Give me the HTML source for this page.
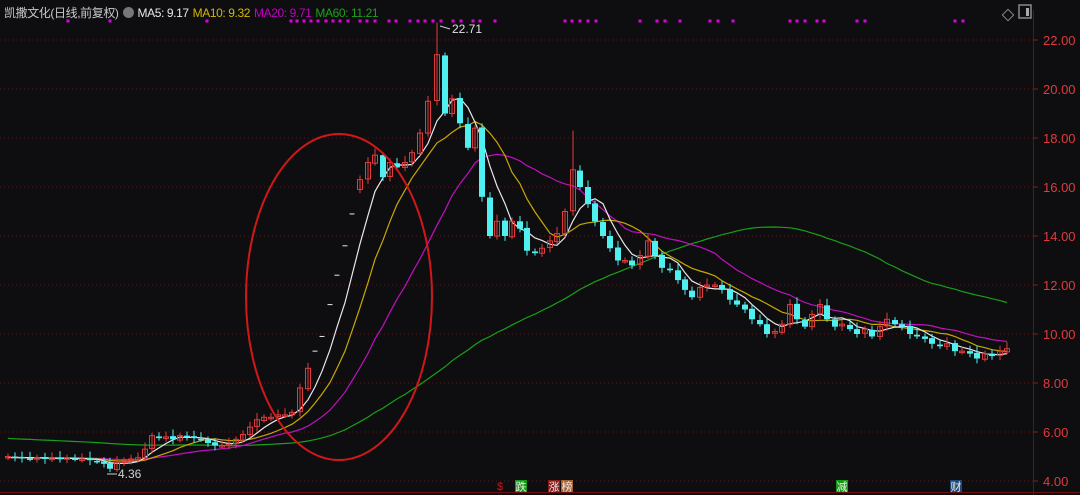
<!DOCTYPE html><html><head><meta charset="utf-8"><style>
body{margin:0;background:#0e0e11;width:1080px;height:495px;overflow:hidden;font-family:"Liberation Sans","Noto Sans CJK SC",sans-serif}
#hd{position:absolute;left:4px;top:4px;font-size:12px;color:#d0d0d0;white-space:nowrap;letter-spacing:-0.4px}
#hd span{margin-right:4px}
</style></head><body>
<svg id="s" width="1080" height="495" style="position:absolute;left:0;top:0"></svg>
<div id="hd"><span style="color:#c8c8c8">凯撒文化(日线,前复权)</span><span style="display:inline-block;width:11px;height:11px;border-radius:50%;background:#777;vertical-align:-1px;margin-right:4px"></span><span style="color:#e8e8e8">MA5: 9.17</span><span style="color:#d4b800">MA10: 9.32</span><span style="color:#c000c0">MA20: 9.71</span><span style="color:#1ea01e">MA60: 11.21</span></div>
<script>
const d=[[8,5.0],[15,4.95],[22,4.95],[30,4.9],[37,4.95],[45,4.9],[52,4.95],[60,4.9],[67,4.95],[75,4.9],[82,4.9],[90,4.85],[97,4.8],[104,4.7],[110,4.5],[117,4.75],[124,4.85],[131,4.9],[138,4.95],[145,5.3],[152,5.85],[159,5.75],[166,5.8],[173,5.7],[180,5.85],[187,5.8],[194,5.75],[201,5.7],[208,5.55],[215,5.45],[222,5.45],[229,5.5],[236,5.7],[243,5.9],[250,6.2],[257,6.5],[264,6.6],[271,6.6],[278,6.7],[285,6.7],[292,6.8],[300,7.8],[308,8.6],[315,9.3],[322,9.9],[330,11.2],[337,12.4],[345,13.6],[352,14.9],[360,16.3],[368,17.0],[375,17.3],[383,16.4],[390,17.0],[397,16.8],[405,17.0],[412,17.4],[420,18.2],[428,19.5],[437,21.4],[445,19.0],[452,19.6],[460,18.6],[468,17.6],[475,18.4],[482,15.6],[490,14.0],[497,14.6],[505,14.0],[512,14.6],[520,14.3],[527,13.4],[535,13.3],[542,13.5],[550,13.8],[557,14.1],[565,15.0],[573,16.7],[580,16.0],[588,15.3],[595,14.6],[603,14.0],[610,13.5],[618,13.0],[625,13.0],[632,12.8],[640,13.2],[648,13.8],[655,13.2],[662,12.7],[670,12.6],[678,12.2],[685,11.8],[692,11.5],[700,11.9],[707,12.0],[715,12.0],[722,11.8],[730,11.4],[737,11.2],[745,11.0],[752,10.6],[760,10.4],[767,10.0],[775,10.1],[782,10.4],[790,11.2],[797,10.6],[805,10.3],[812,10.8],[820,11.2],[827,10.6],[835,10.3],[842,10.4],[850,10.2],[857,10.0],[865,10.2],[872,9.9],[880,10.3],[887,10.6],[895,10.4],[902,10.3],[910,10.0],[917,9.9],[925,9.8],[932,9.6],[940,9.5],[947,9.6],[955,9.3],[962,9.3],[970,9.2],[977,9.0],[985,9.2],[992,9.1],[1000,9.3],[1007,9.4]];
const doji=[315,322,330,337,345,352];
const Y=p=>40+(22-p)*24.5;let h='';
for(let p=22;p>=4;p-=2){const y=Y(p);h+=`<line x1="0" x2="1033" y1="${y}" y2="${y}" stroke="#5a1414" stroke-dasharray="1 3"/><line x1="1033" x2="1038" y1="${y}" y2="${y}" stroke="#8a1c1c"/><text x="1043" y="${y+5}" fill="#e03a3a" font-size="13">${p.toFixed(2)}</text>`;}
h+=`<line x1="1033.5" x2="1033.5" y1="10" y2="495" stroke="#6a1010"/><line x1="0" x2="1080" y1="492.5" y2="492.5" stroke="#6a1010"/>`;
const cl=d.map(a=>a[1]);function ma(n,pad){let pts=[];for(let i=0;i<cl.length;i++){let s=0;for(let k=i-n+1;k<=i;k++)s+=k>=0?cl[k]:pad;pts.push(d[i][0]+','+Y(s/n).toFixed(1));}return pts.join(' ');}
h+=`<polyline fill="none" stroke="#18a018" stroke-width="1.2" points="${ma(60,5.75)}"/>`;
h+=`<polyline fill="none" stroke="#c010c0" stroke-width="1.2" points="${ma(20,4.95)}"/>`;
h+=`<polyline fill="none" stroke="#c8a800" stroke-width="1.2" points="${ma(10,4.95)}"/>`;
h+=`<polyline fill="none" stroke="#e8e8e8" stroke-width="1.2" points="${ma(5,4.95)}"/>`;
for(let i=0;i<d.length;i++){const x=d[i][0],c=d[i][1];
if(doji.includes(x)){h+=`<line x1="${x-2.5}" x2="${x+2.5}" y1="${Y(c)}" y2="${Y(c)}" stroke="#e8e8e8"/>`;continue;}
let o=i?d[i-1][1]+(i%3-1)*0.03:c-0.05;if(x==360)o=15.9;
const up=c>=o;const hi=Math.max(o,c)+0.12+(i%4)*0.05,lo=Math.min(o,c)-0.1-(i%3)*0.05;
let H=hi,L=lo;if(x==437)H=22.71;if(x==573)H=18.3;if(x==110)L=4.36;
const col=up?'#e03c3c':'#50f0f0';h+=`<line x1="${x}" x2="${x}" y1="${Y(H)}" y2="${Y(L)}" stroke="${col}"/>`;
const t=Y(Math.max(o,c)),b=Math.max(Y(Math.min(o,c)),t+1.5);
h+=up?`<rect x="${x-2.5}" y="${t}" width="5" height="${b-t}" fill="none" stroke="${col}"/>`:`<rect x="${x-3}" y="${t}" width="6" height="${b-t}" fill="${col}"/>`;}
h+=`<text x="452" y="33" fill="#e0e0e0" font-size="12">22.71</text><line x1="440" x2="450" y1="26" y2="29" stroke="#ccc"/>`;
h+=`<text x="118" y="478" fill="#d0d0d0" font-size="12">4.36</text><line x1="107" x2="117" y1="474" y2="474" stroke="#ccc"/>`;
h+=`<ellipse cx="339" cy="297" rx="93" ry="163" fill="none" stroke="#d01818" stroke-width="2"/>`;
[68,110,207,291,297,304,311,318,326,333,340,348,360,367,375,389,396,410,418,425,433,441,453,461,473,480,495,565,572,580,588,596,640,657,665,680,710,718,733,790,797,805,817,824,857,865,955,963].forEach(x=>h+=`<rect x="${x-1.5}" y="19.5" width="3" height="3" fill="#e000e0"/>`);
h+=`<rect x="1004" y="11" width="8" height="8" transform="rotate(45 1008 15)" fill="none" stroke="#888"/><rect x="1019" y="5" width="12" height="13" fill="none" stroke="#888" stroke-width="1.5"/><rect x="1026" y="8" width="3" height="8" fill="#aaa"/>`;
h+=`<text x="497" y="490" fill="#e01010" font-size="11">$</text>`;
[[515,'跌','#169a16'],[548,'涨','#8a1a1a'],[561,'榜','#a86030'],[836,'减','#169a16'],[950,'财','#1e4a7a']].forEach(([x,t,c])=>h+=`<rect x="${x}" y="480" width="12" height="12" fill="${c}"/><text x="${x+0.5}" y="490.5" fill="#eee" font-size="11">${t}</text>`);
document.getElementById('s').innerHTML=h;
</script></body></html>
